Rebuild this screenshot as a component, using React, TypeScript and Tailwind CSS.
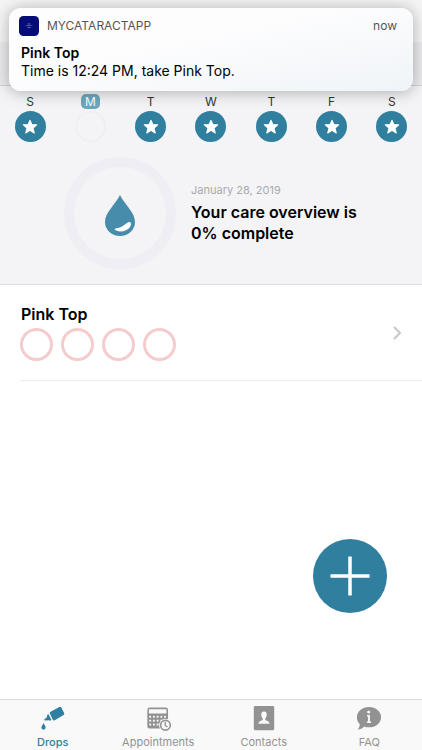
import type { ReactNode } from "react";

const days = [
  { letter: "S", done: true },
  { letter: "M", done: false },
  { letter: "T", done: true },
  { letter: "W", done: true },
  { letter: "T", done: true },
  { letter: "F", done: true },
  { letter: "S", done: true },
];

function Star() {
  return (
    <svg viewBox="0 0 14 14" className="size-4" fill="white" stroke="white" strokeWidth="1" strokeLinejoin="round" aria-hidden="true">
      <path d="M7 1.2 8.7 5H12.8L9.6 7.9 10.7 12.2 7 9.9 3.3 12.2 4.4 7.9 1.2 5H5.3Z" />
    </svg>
  );
}

function DropsIcon() {
  return (
    <svg viewBox="0 0 28 28" className="size-7" fill="currentColor" aria-hidden="true">
      <path d="M10.6 8.2Q10.2 6.9 11.4 6.2L20.8 1Q22.2.4 22.9 1.6L26 7.5Q26.6 8.9 25.4 9.7L15.9 15.3Q14.5 16 13.8 14.7Z" />
      <path d="M7.8 9.4 9.2 8.8 12.3 15.2 11 15.9 9.5 15.3 5 15.6 4.5 14.5 7.4 12.2Z" />
      <path d="M3.8 18C4.3 20.2 6.2 21.4 6.1 23.2A2.3 2.3 0 0 1 1.5 23.2C1.4 21.4 3.3 20.2 3.8 18Z" />
    </svg>
  );
}

function AppointmentsIcon() {
  return (
    <svg viewBox="0 0 28 28" className="size-7" aria-hidden="true">
      <rect x="2.5" y="1.7" width="22.3" height="22.5" rx="2.5" fill="currentColor" />
      <rect x="4.2" y="3.4" width="18.9" height="4.6" rx=".5" fill="#f9f9f9" />
      <g fill="#f9f9f9">
        {[10.6, 14.8, 19].map((y) =>
          [4.6, 8.6, 12.6, 16.6, 20.6].map((x) => <rect key={`${x}-${y}`} x={x} y={y} width="2" height="2" />),
        )}
      </g>
      <circle cx="22" cy="20.7" r="6.9" fill="#f9f9f9" />
      <circle cx="22" cy="20.7" r="5.2" fill="#f9f9f9" stroke="currentColor" strokeWidth="1.8" />
      <path d="M21.8 17.2V21L24.2 22.6" fill="none" stroke="currentColor" strokeWidth="1.5" />
    </svg>
  );
}

function ContactsIcon() {
  return (
    <svg viewBox="0 0 28 28" className="size-7" aria-hidden="true">
      <path d="M3 1.5Q3 0 4.5 0H23.5Q25 0 25 1.5V24.5Q25 26 23.5 26H4.5Q3 26 3 24.5Z" fill="currentColor" />
      <path d="M14 6C11.7 6 10.8 7.8 11.1 10 11.3 11.8 12 12.8 12.6 13.4V15C11.4 16 8.1 16 8 19H20C19.9 16 16.6 16 15.4 15V13.4C16 12.8 16.7 11.8 16.9 10 17.2 7.8 16.3 6 14 6Z" fill="#f9f9f9" />
    </svg>
  );
}

function FaqIcon() {
  return (
    <svg viewBox="0 0 28 28" className="size-7" aria-hidden="true">
      <path d="M14 1C21.3 1 27 5.8 27 12S21.3 23 14 23C12 23 10.3 22.7 8.7 22 7 23.8 4.5 25.4 1.8 25.3 3.5 23.7 4 21.6 4.1 19.5 2 17.5 1 14.9 1 12 1 5.8 6.7 1 14 1Z" fill="currentColor" />
      <circle cx="13.7" cy="6.5" r="1.7" fill="#f9f9f9" />
      <path d="M11.8 9.8H15V16.8H16.2V18.2H11.8V16.8H12.9V11.2H11.8Z" fill="#f9f9f9" />
    </svg>
  );
}

function Tab({ label, active = false, children }: { label: string; active?: boolean; children: ReactNode }) {
  return (
    <button
      type="button"
      aria-current={active ? "page" : undefined}
      className={`flex flex-1 flex-col items-center pt-1.5 ${active ? "font-medium text-[#307f9f]" : "text-[#929292]"}`}
    >
      {children}
      <span className="mt-0.5 text-[11px] leading-4">{label}</span>
    </button>
  );
}

export default function App() {
  return (
    <div className="relative flex min-h-screen flex-col overflow-hidden bg-white font-['Inter','Liberation_Sans',sans-serif] text-black">
      <aside className="absolute inset-x-[9px] top-2 z-10 h-[83px] rounded-xl bg-linear-to-br from-[#fdfdfe] from-40% to-[#f0f4f8] px-3 pt-2 shadow-[0_1px_16px_rgba(0,0,0,0.3)]">
        <header className="flex h-5 items-center">
          <svg viewBox="0 0 20 20" className="-ml-0.5 mr-2 size-5" aria-hidden="true">
            <rect width="20" height="20" rx="4.5" fill="#050b78" />
            <path d="M6.5 9.5H13.5M8 11.5H12M8.5 8H11.5M10 6.8V12.5" stroke="#7185c8" strokeWidth=".5" />
          </svg>
          <span className="text-xs text-[#555]">MYCATARACTAPP</span>
          <time className="ml-auto pr-1 text-xs text-[#555]">now</time>
        </header>
        <h2 className="mt-2 text-sm leading-[18px] font-semibold">Pink Top</h2>
        <p className="text-sm leading-[18px]">Time is 12:24 PM, take Pink Top.</p>
      </aside>

      <div className="h-[42px] bg-[#f5f5f5]" />
      <div className="h-11 border-b border-[#d0d0d3] bg-[#ebebed]" />

      <section className="h-[199px] border-b border-[#dedee0] bg-[#f4f4f7]">
        <ol className="flex pt-2">
          {days.map((day, i) => (
            <li key={i} className="flex flex-1 flex-col items-center gap-0.5">
              <span className={`flex h-[15px] items-center rounded-[5px] px-1 text-xs leading-none ${day.done ? "text-[#333]" : "bg-[#6da7be] text-white"}`}>
                {day.letter}
              </span>
              {day.done ? (
                <span className="flex size-[31px] items-center justify-center rounded-full bg-[#307f9f]">
                  <Star />
                </span>
              ) : (
                <span className="size-[31px] rounded-full border-2 border-[#efeef4]" />
              )}
            </li>
          ))}
        </ol>
        <div className="mt-[15px] flex items-center gap-[15px] pl-16">
          <div className="flex size-28 shrink-0 items-center justify-center rounded-full border-10 border-[#efeef4]">
            <svg viewBox="0 0 30 41" className="mt-1 h-[41px] w-[30px]" aria-hidden="true">
              <path d="M15 0C19 9 30 17 30 27A15 14 0 0 1 0 27C0 17 11 9 15 0Z" fill="#478caa" />
              <path d="M10.5 33.5C18.5 33 20.5 27 25 27 28.5 29.5 23 36.5 16 36.5 12 36.5 8 34 10.5 33.5Z" fill="white" />
            </svg>
          </div>
          <div>
            <p className="text-[11px] leading-4 text-[#aaa]">January 28, 2019</p>
            <h1 className="mt-1 text-base leading-[21px] font-semibold">
              Your care overview is
              <br />
              0% complete
            </h1>
          </div>
        </div>
      </section>

      <main className="flex-1">
        <button type="button" className="ml-5 flex h-24 w-[calc(100%-20px)] items-center justify-between border-b border-[#ececec] pr-5 text-left">
          <span>
            <span className="block pl-px text-base leading-5 font-semibold">Pink Top</span>
            <span className="mt-1 flex gap-2">
              {[1, 2, 3, 4].map((dose) => (
                <span key={dose} className="size-[33px] rounded-full border-3 border-[#f5cccd]" />
              ))}
            </span>
          </span>
          <svg viewBox="0 0 10 16" className="h-4 w-2.5" fill="none" stroke="#c7c7cc" strokeWidth="2" aria-hidden="true">
            <path d="M2 2 8 8 2 14" />
          </svg>
        </button>
      </main>

      <button type="button" aria-label="Add drop" className="absolute right-[35px] bottom-[137px] flex size-[74px] items-center justify-center rounded-full bg-[#307f9f]">
        <svg viewBox="0 0 40 40" className="size-10" stroke="white" strokeWidth="3.5" aria-hidden="true">
          <path d="M20 0.5V39.5M0.5 20H39.5" />
        </svg>
      </button>

      <nav className="flex h-[51px] border-t border-[#dadada] bg-[#f9f9f9]">
        <Tab label="Drops" active><DropsIcon /></Tab>
        <Tab label="Appointments"><AppointmentsIcon /></Tab>
        <Tab label="Contacts"><ContactsIcon /></Tab>
        <Tab label="FAQ"><FaqIcon /></Tab>
      </nav>
    </div>
  );
}
